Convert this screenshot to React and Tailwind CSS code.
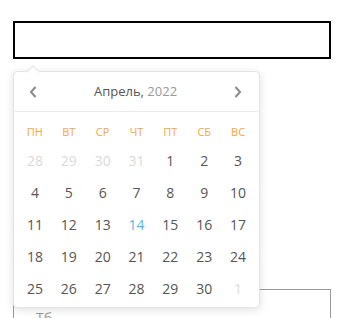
const weekDays = ['ПН', 'ВТ', 'СР', 'ЧТ', 'ПТ', 'СБ', 'ВС'];

const weeks = [
  [[28, true], [29, true], [30, true], [31, true], [1], [2], [3]],
  [[4], [5], [6], [7], [8], [9], [10]],
  [[11], [12], [13], [14], [15], [16], [17]],
  [[18], [19], [20], [21], [22], [23], [24]],
  [[25], [26], [27], [28], [29], [30], [1, true]],
];

function Chevron({ dir }) {
  return (
    <svg width="8" height="12" viewBox="0 0 8 12" fill="none">
      <path
        d={dir === 'left' ? 'M6.5 1L2 6l4.5 5' : 'M1.5 1L6 6l-4.5 5'}
        stroke="#8a8a8a"
        strokeWidth="2"
      />
    </svg>
  );
}

function DatePicker() {
  return (
    <div className="absolute left-[13px] top-[71px] w-[247px] rounded-[4px] border border-[#e4e4e4] bg-white shadow-[0_2px_8px_rgba(0,0,0,0.12)]">
      {/* pointer */}
      <div className="absolute left-[14px] top-[-5px] h-[10px] w-[10px] rotate-45 border-l border-t border-[#e4e4e4] bg-white"></div>

      <div className="relative flex h-[40px] items-center justify-between border-b border-[#ececec] pl-[15px] pr-[17px]">
        <Chevron dir="left" />
        <span className="text-[13px] text-[#555]">
          Апрель, <span className="text-[#999]">2022</span>
        </span>
        <Chevron dir="right" />
      </div>

      <div className="px-[4px] pb-[3px] pt-[8px]">
        <div className="grid h-[24px] grid-cols-7 items-center text-center text-[11px] text-[#f7a541]">
          {weekDays.map((d) => (
            <div key={d}>{d}</div>
          ))}
        </div>
        {weeks.map((week, i) => (
          <div key={i} className="grid h-[32px] grid-cols-7 items-center text-center text-[14px]">
            {week.map(([n, muted], j) => (
              <div
                key={j}
                className={
                  muted
                    ? 'text-[#dadada]'
                    : n === 14 && i === 2
                    ? 'text-[#5ab4e5]'
                    : 'text-[#555]'
                }
              >
                {n}
              </div>
            ))}
          </div>
        ))}
      </div>
    </div>
  );
}

export default function App() {
  return (
    <div
      className="relative h-[318px] overflow-hidden bg-white px-[13px] pt-[21px]"
      style={{ fontFamily: '"Open Sans", "Noto Sans", sans-serif' }}
    >
      <input className="block h-[38px] w-[318px] border-2 border-black outline-none" />

      <div className="mt-[230px] h-[60px] w-[318px] border border-[#999] px-[22px] pt-[18px] text-[14px] leading-[20px] text-[#999]">
        Тб
      </div>

      <DatePicker />
    </div>
  );
}
